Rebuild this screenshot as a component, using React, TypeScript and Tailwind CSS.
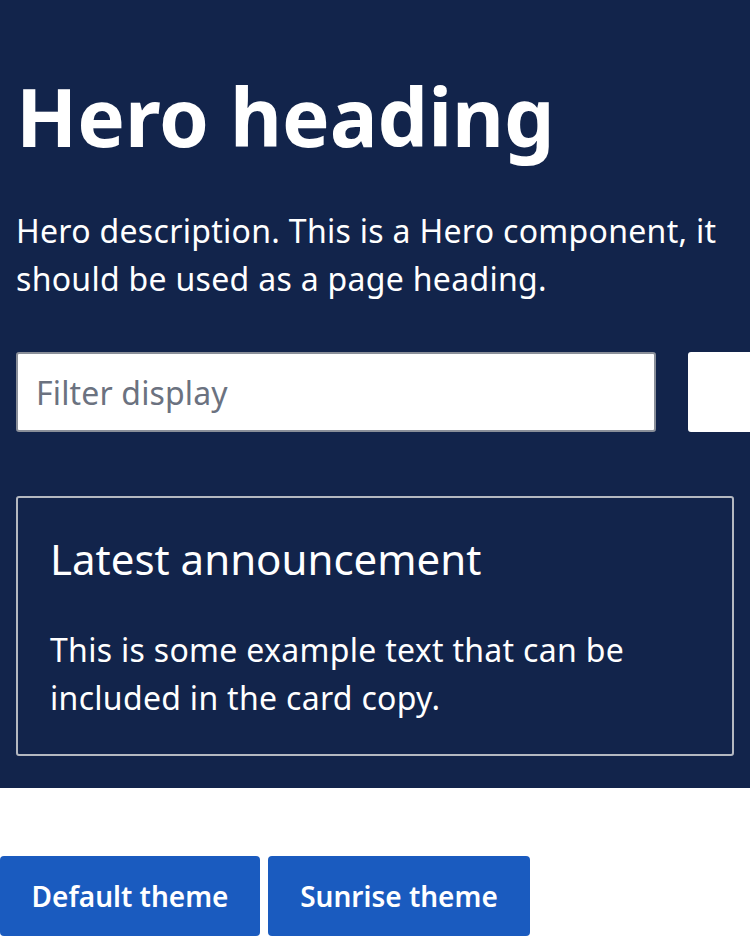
import React from "react";

export default function App() {
  return (
    <div className="w-[750px] h-[938px] overflow-hidden bg-white" style={{ fontFamily: '"Noto Sans", "Open Sans", sans-serif' }}>
      <section className="bg-[#12244b] px-4 pt-[68px] pb-[32px]">
        <h1 className="text-[80px] leading-[96px] font-bold text-white">Hero heading</h1>
        <p className="mt-[43px] text-[32px] leading-[48px] tracking-[0.3px] text-white">
          Hero description. This is a Hero component, it should be used as a page heading.
        </p>
        <div className="mt-[49px] flex gap-[32px] w-[900px]">
          <input
            className="w-[640px] h-[80px] shrink-0 rounded-[3px] border-2 border-[#8a8f99] bg-white px-[18px] text-[32px] tracking-[0.15px] text-gray-900 placeholder:text-[#6b7280] outline-none"
            placeholder="Filter display"
          />
          <button className="w-[200px] h-[80px] shrink-0 rounded-[3px] bg-white"></button>
        </div>
        <div className="mt-[64px] w-[718px] rounded-[3px] border-2 border-[#b4b8c0] px-[32px] pt-[35px] pb-[32px]">
          <h2 className="text-[42px] leading-[52px] font-normal text-white">Latest announcement</h2>
          <p className="mt-[41px] text-[32px] leading-[48px] tracking-[0.3px] text-white">
            This is some example text that can be included in the card copy.
          </p>
        </div>
      </section>
      <div className="mt-[68px] flex gap-[8px]">
        <button className="w-[260px] h-[80px] rounded-[4px] bg-[#1a5bbf] text-white text-[28px] font-semibold">Default theme</button>
        <button className="w-[262px] h-[80px] rounded-[4px] bg-[#1a5bbf] text-white text-[28px] font-semibold">Sunrise theme</button>
      </div>
    </div>
  );
}
